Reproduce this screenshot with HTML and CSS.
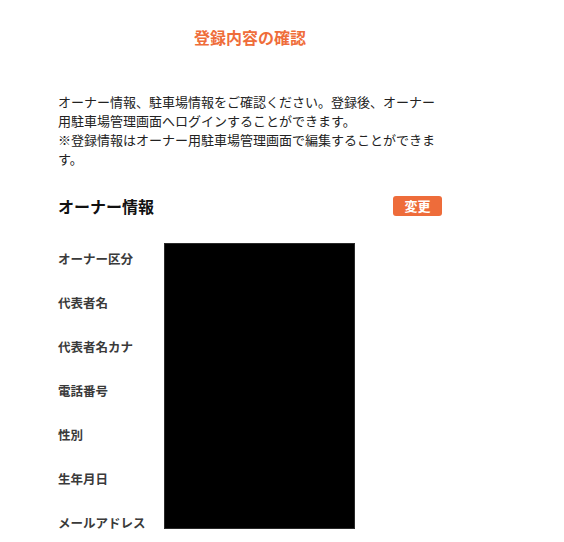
FILE: index.html
```html
<!DOCTYPE html>
<html lang="ja">
<head>
<meta charset="utf-8">
<title>登録内容の確認</title>
<link rel="stylesheet" href="styles.css">
</head>
<body>
<main class="page">
  <h1 class="title">登録内容の確認</h1>
  <p class="lead">オーナー情報、駐車場情報をご確認ください。登録後、オーナー用駐車場管理画面へログインすることができます。<br>※登録情報はオーナー用駐車場管理画面で編集することができます。</p>
  <section class="section">
    <div class="section-head">
      <h2 class="section-title">オーナー情報</h2>
      <button class="btn-edit" type="button">変更</button>
    </div>
    <div class="info">
      <ul class="labels">
        <li>オーナー区分</li>
        <li>代表者名</li>
        <li>代表者名カナ</li>
        <li>電話番号</li>
        <li>性別</li>
        <li>生年月日</li>
        <li>メールアドレス</li>
      </ul>
      <div class="values"></div>
    </div>
  </section>
</main>
</body>
</html>
```
FILE: styles.css
```css
html, body {
  margin: 0;
  padding: 0;
  background: #fff;
}
body {
  font-family: "Noto Sans CJK JP", "Noto Sans", sans-serif;
  color: #222;
}
.page {
  width: 384px;
  margin-left: 58px;
  padding-top: 25px;
}
.title {
  margin: 0;
  font-size: 16px;
  line-height: 24px;
  font-weight: bold;
  color: #ef6d3a;
  text-align: center;
}
.lead {
  margin: 43px 0 0;
  font-size: 13px;
  line-height: 19px;
  color: #222;
}
.section {
  margin-top: 28px;
}
.section-head {
  display: flex;
  align-items: center;
  justify-content: space-between;
  height: 20px;
}
.section-title {
  margin: 0;
  font-size: 16px;
  line-height: 20px;
  font-weight: bold;
  color: #111;
}
.btn-edit {
  width: 49px;
  height: 20px;
  padding: 0;
  border: none;
  border-radius: 3px;
  background: #ee6c3a;
  color: #fff;
  font-family: inherit;
  font-size: 13px;
  font-weight: bold;
  line-height: 20px;
}
.info {
  display: flex;
  margin-top: 20px;
}
.labels {
  list-style: none;
  margin: 0;
  padding: 0;
  width: 106px;
}
.labels li {
  height: 44px;
  display: flex;
  align-items: center;
  font-size: 12.5px;
  font-weight: bold;
  color: #3a3a3a;
}
.values {
  width: 191px;
  height: 286px;
  margin-top: 7px;
  background: #000;
  box-shadow: 0 0 0 1px #2a2a2a inset;
}
```
